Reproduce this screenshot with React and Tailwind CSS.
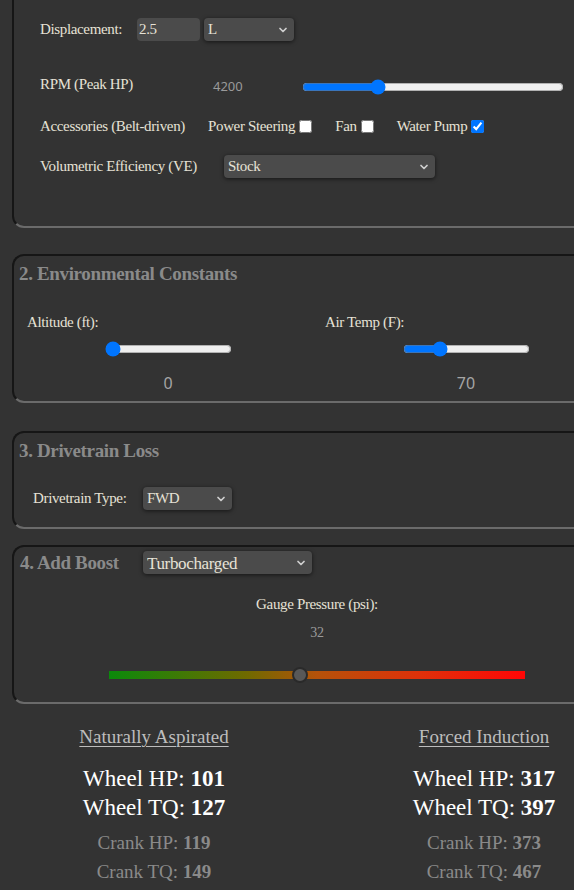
import { ChevronDown } from 'lucide-react';

const serif = { fontFamily: '"Liberation Serif", "DejaVu Serif", serif' };

const Select = ({ value, width, height = 'h-[23px]', text = 'text-[15px]' }) => (
  <div className={`relative ${width} ${height} rounded-[4px] bg-[#4b4b4b] shadow-[0_1px_4px_rgba(0,0,0,0.6)]`}>
    <select
      defaultValue={value}
      className={`w-full h-full appearance-none bg-transparent pl-[4px] pr-6 ${text} text-[#e6e2d6] outline-none`}
      style={serif}
    >
      <option>{value}</option>
    </select>
    <ChevronDown size={12} strokeWidth={3.5} className="absolute right-[5px] top-1/2 -translate-y-1/2 text-[#cfcfcf] pointer-events-none" />
  </div>
);

const Panel = ({ children, top = true, className = '' }) => (
  <div
    className={`ml-[12px] w-[610px] bg-[#333333] border-l-2 border-b-2 border-r-2 border-l-[#161616] border-r-[#6b6b6b] border-b-[#6b6b6b] ${
      top ? 'border-t-2 border-t-[#161616] rounded-[12px]' : 'rounded-b-[12px]'
    } ${className}`}
  >
    {children}
  </div>
);

const Heading = ({ children }) => (
  <h2 className="text-[19px] leading-[22px] font-bold text-[#8a8a8a]">{children}</h2>
);

const Check = ({ label, checked }) => (
  <label className="flex items-center">
    <span>{label}</span>
    <input type="checkbox" defaultChecked={checked} className="ml-[4px] w-[13px] h-[13px]" />
  </label>
);

const Result = ({ title, whp, wtq, chp, ctq, width }) => (
  <div className={`${width} shrink-0 flex flex-col items-center`}>
    <div className="text-[19px] leading-[22px] text-[#bdbdbd] underline underline-offset-[3px] decoration-1">{title}</div>
    <div className="mt-[16px] text-[23px] leading-[29px] text-white">
      Wheel HP: <b>{whp}</b>
    </div>
    <div className="text-[23px] leading-[29px] text-white">
      Wheel TQ: <b>{wtq}</b>
    </div>
    <div className="mt-[6px] text-[19px] leading-[29px] text-[#8a8a8a]">
      Crank HP: <span className="font-semibold">{chp}</span>
    </div>
    <div className="text-[19px] leading-[29px] text-[#8a8a8a]">
      Crank TQ: <span className="font-semibold">{ctq}</span>
    </div>
  </div>
);

export default function App() {
  return (
    <div
      className="w-[574px] h-[890px] overflow-hidden bg-[#333333] text-[15px] tracking-[-0.35px] text-[#e6e2d6]"
      style={serif}
    >
      {/* 1. engine */}
      <Panel top={false} className="pt-[18px] pb-[48px] pl-[26px]">
        <div className="flex items-center h-[23px]">
          <span className="w-[97px]">Displacement:</span>
          <input
            defaultValue="2.5"
            className="w-[63px] h-[23px] rounded-[4px] bg-[#4b4b4b] px-[2px] text-[15px] text-[#e6e2d6] outline-none"
            style={serif}
          />
          <div className="ml-[4px]">
            <Select value="L" width="w-[90px]" />
          </div>
        </div>
        <div className="mt-[35px] flex items-center h-[22px]">
          <span className="w-[173px] -mt-[6px]">RPM (Peak HP)</span>
          <span className="w-[89px] text-[13px] tracking-normal text-[#9a9a9a]" style={{ fontFamily: '"Noto Sans", sans-serif' }}>
            4200
          </span>
          <input type="range" min="2000" max="10000" defaultValue="4200" className="w-[262px] m-0" />
        </div>
        <div className="mt-[18px] flex items-center h-[20px]">
          <span className="w-[168px]">Accessories (Belt-driven)</span>
          <div className="flex items-center gap-[23px]">
            <Check label="Power Steering" />
            <Check label="Fan" />
            <Check label="Water Pump" checked />
          </div>
        </div>
        <div className="mt-[19px] flex items-center h-[23px]">
          <span className="w-[184px]">Volumetric Efficiency (VE)</span>
          <Select value="Stock" width="w-[211px]" />
        </div>
      </Panel>

      {/* 2. environment */}
      <Panel className="mt-[26px] pl-[5px] pt-[7px] pb-[7px]">
        <Heading>2. Environmental Constants</Heading>
        <div className="mt-[27px] grid grid-cols-[298px_298px]">
          {[
            { label: 'Altitude (ft):', min: 0, max: 10000, value: 0 },
            { label: 'Air Temp (F):', min: 0, max: 260, value: 70 },
          ].map((c) => (
            <div key={c.label} className="flex flex-col items-center">
              <span className="self-start pl-[8px] leading-[20px]">{c.label}</span>
              <input type="range" min={c.min} max={c.max} defaultValue={c.value} className="mt-[9px] w-[127px] m-0" />
              <span
                className="mt-[15px] text-[16px] leading-[22px] tracking-normal text-[#a5a5a5]"
                style={{ fontFamily: '"Noto Sans", sans-serif' }}
              >
                {c.value}
              </span>
            </div>
          ))}
        </div>
      </Panel>

      {/* 3. drivetrain */}
      <Panel className="mt-[28px] pl-[5px] pt-[7px] pb-[17px]">
        <Heading>3. Drivetrain Loss</Heading>
        <div className="mt-[25px] pl-[14px] flex items-center h-[23px]">
          <span className="w-[110px]">Drivetrain Type:</span>
          <Select value="FWD" width="w-[89px]" />
        </div>
      </Panel>

      {/* 4. boost */}
      <Panel className="mt-[16px] pl-[5px] pt-[4px] pb-[23px]">
        <div className="flex items-center h-[23px]">
          <div className="w-[124px] pl-[1px]">
            <Heading>4. Add Boost</Heading>
          </div>
          <Select value="Turbocharged" width="w-[169px]" text="text-[17px]" />
        </div>
        <div className="flex flex-col items-center pr-[5px]">
          <span className="mt-[20px] leading-[20px]">Gauge Pressure (psi):</span>
          <span className="mt-[10px] text-[14px] leading-[18px] text-[#9a9a9a]">32</span>
          <input
            type="range"
            min="0"
            max="70"
            defaultValue="32"
            className="mt-[29px] w-[416px] h-[8px] appearance-none outline-none bg-[linear-gradient(to_right,#0b8a0b,#6f6a00_33%,#b5520a_50%,#e0300a_75%,#ff0606)] [&::-webkit-slider-thumb]:appearance-none [&::-webkit-slider-thumb]:w-[16px] [&::-webkit-slider-thumb]:h-[16px] [&::-webkit-slider-thumb]:rounded-full [&::-webkit-slider-thumb]:bg-[#585858] [&::-webkit-slider-thumb]:border-2 [&::-webkit-slider-thumb]:border-[#2a2a2a]"
          />
        </div>
      </Panel>

      {/* results */}
      <div className="mt-[22px] flex tracking-normal">
        <Result title="Naturally Aspirated" whp="101" wtq="127" chp="119" ctq="149" width="w-[308px]" />
        <Result title="Forced Induction" whp="317" wtq="397" chp="373" ctq="467" width="w-[352px]" />
      </div>
    </div>
  );
}
